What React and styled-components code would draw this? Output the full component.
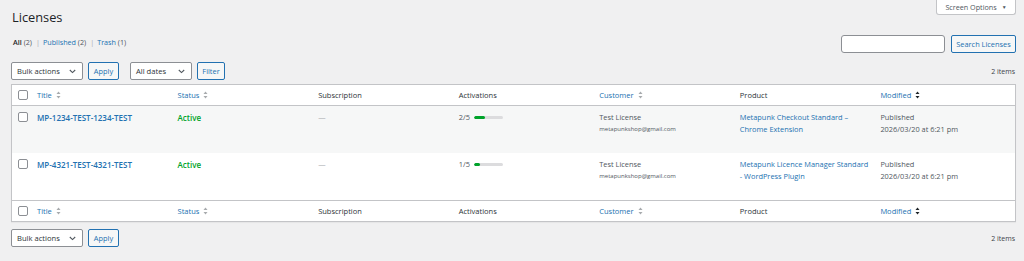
import React from "react";
import styled, { createGlobalStyle } from "styled-components";

const Global = createGlobalStyle`
  html, body { margin: 0; padding: 0; background: #f0f0f1; }
  body { font-family: "Open Sans", "Noto Sans", sans-serif; color: #3c434a; font-size: 7.3px; }
  * { box-sizing: border-box; }
`;

const Wrap = styled.div`
  padding: 0 8px 0 11px;
  width: 1024px;
`;

const TopRow = styled.div`
  display: flex;
  justify-content: space-between;
  align-items: flex-start;
  height: 35px;
`;

const Heading = styled.h1`
  margin: 0;
  padding: 8px 0 0 1px;
  font-size: 12.8px;
  line-height: 18px;
  font-weight: 400;
  color: #1d2327;
`;

const ScreenOptions = styled.button`
  height: 15px;
  width: 80px;
  border: 1px solid #c3c4c7;
  border-top: none;
  border-radius: 0 0 3px 3px;
  background: #fff;
  color: #50575e;
  font-family: inherit;
  font-size: 7.2px;
  display: flex;
  align-items: center;
  justify-content: center;
  gap: 5px;
  padding: 0 0 1px 0;
  cursor: pointer;
`;

const Caret = styled.span`
  font-size: 5px;
  color: #50575e;
`;

const SubRow = styled.div`
  display: flex;
  justify-content: space-between;
  align-items: flex-start;
  height: 27px;
`;

const SubSub = styled.ul`
  list-style: none;
  margin: 0;
  padding: 1px 0 0 2px;
  display: flex;
  font-size: 7.2px;
  line-height: 12px;
  color: #646970;
`;

const SubItem = styled.li`
  white-space: pre;
`;

const Sep = styled.span`
  color: #a7aaad;
  margin: 0 3px 0 4px;
`;

const SubLink = styled.a`
  color: ${(p) => (p.$current ? "#1d2327" : "#2271b1")};
  font-weight: ${(p) => (p.$current ? 600 : 400)};
  text-decoration: none;
`;

const Count = styled.span`
  color: #50575e;
`;

const SearchBox = styled.div`
  display: flex;
  gap: 6px;
`;

const SearchInput = styled.input`
  width: 104px;
  height: 18px;
  border: 1px solid #8c8f94;
  border-radius: 3px;
  background: #fff;
  padding: 0 4px;
`;

const Button = styled.button`
  height: 18px;
  width: ${(p) => p.$w}px;
  border: 1px solid #2271b1;
  border-radius: 2px;
  background: #f6f7f7;
  color: #2271b1;
  font-family: inherit;
  font-size: 7.4px;
  padding: 0;
  cursor: pointer;
`;

const TableNav = styled.div`
  display: flex;
  align-items: center;
  height: 18px;
  margin: ${(p) => (p.$bottom ? "7px 0 0" : "0")};
`;

const Actions = styled.div`
  display: flex;
  align-items: center;
  gap: 5px;
  margin-right: ${(p) => p.$mr || 0}px;
`;

const Select = styled.div`
  width: ${(p) => p.$w}px;
  height: 18px;
  border: 1px solid #8c8f94;
  border-radius: 2px;
  background: #fff;
  color: #2c3338;
  display: flex;
  align-items: center;
  justify-content: space-between;
  padding: 0 6px 0 5px;
  font-size: 7.6px;
`;

const Items = styled.div`
  margin-left: auto;
  font-size: 7px;
  color: #3c434a;
  padding-right: 1px;
`;

const Table = styled.table`
  width: 100%;
  margin-top: 4px;
  border: 1px solid #c3c4c7;
  border-collapse: separate;
  border-spacing: 0;
  background: #fff;
  table-layout: fixed;
  box-shadow: 0 1px 1px rgba(0, 0, 0, 0.04);
`;

const CbCol = styled.col`
  width: 19px;
`;

const Th = styled.th`
  text-align: left;
  font-weight: 400;
  font-size: 7.5px;
  height: 21px;
  padding: 0 6px;
  color: #2c3338;
  vertical-align: middle;
  border-bottom: ${(p) => (p.$foot ? "none" : "1px solid #c3c4c7")};
  border-top: ${(p) => (p.$foot ? "1px solid #c3c4c7" : "none")};
`;

const CbCell = styled.td`
  padding: ${(p) => (p.$head ? "0 0 0 6px" : "6px 0 0 6px")};
  vertical-align: ${(p) => (p.$head ? "middle" : "top")};
  border-bottom: ${(p) => (p.$headBorder ? "1px solid #c3c4c7" : "none")};
  border-top: ${(p) => (p.$footBorder ? "1px solid #c3c4c7" : "none")};
`;

const Check = styled.span`
  display: block;
  width: 10px;
  height: 10px;
  border: 1px solid #8c8f94;
  border-radius: 2px;
  background: #fff;
`;

const SortLink = styled.a`
  color: #2271b1;
  text-decoration: none;
  display: inline-flex;
  align-items: center;
  gap: 4px;
`;

const Row = styled.tr`
  background: ${(p) => (p.$alt ? "#f6f7f7" : "#fff")};
`;

const Td = styled.td`
  height: 47px;
  padding: 6px 6px 0;
  vertical-align: top;
  font-size: 7.4px;
  line-height: 11.5px;
  color: #50575e;
`;

const TitleLink = styled.a`
  color: #2271b1;
  font-weight: 600;
  font-size: 8px;
  text-decoration: none;
`;

const Active = styled.span`
  color: #00a32a;
  font-weight: 600;
  font-size: 8px;
`;

const Dash = styled.span`
  color: #a7aaad;
`;

const ActWrap = styled.div`
  display: flex;
  align-items: center;
  gap: 4px;
`;

const Bar = styled.div`
  width: 29px;
  height: 3px;
  border-radius: 2px;
  background: #dcdcde;
  overflow: hidden;
`;

const Fill = styled.div`
  height: 100%;
  background: #00a32a;
  border-radius: 2px;
`;

const Email = styled.div`
  font-size: 6px;
  line-height: 11px;
`;

const ProductLink = styled.a`
  color: #2271b1;
  text-decoration: none;
`;

const SortIcon = ({ dark }) => (
  <svg width="5" height="8" viewBox="0 0 5 8">
    <path d="M2.5 0.5 L4.5 3 L0.5 3 Z" fill={dark ? "#1d2327" : "#a7aaad"} />
    <path d="M2.5 7.5 L4.5 5 L0.5 5 Z" fill={dark ? "#1d2327" : "#a7aaad"} />
  </svg>
);

const Chevron = () => (
  <svg width="7" height="5" viewBox="0 0 7 5">
    <path d="M0.8 1 L3.5 3.6 L6.2 1" fill="none" stroke="#50575e" strokeWidth="1.1" />
  </svg>
);

const rows = [
  {
    title: "MP-1234-TEST-1234-TEST",
    act: 2,
    product: ["Metapunk Checkout Standard –", "Chrome Extension"],
  },
  {
    title: "MP-4321-TEST-4321-TEST",
    act: 1,
    product: ["Metapunk Licence Manager Standard", "- WordPress Plugin"],
  },
];

const HeadCells = ({ foot }) => (
  <tr>
    <CbCell $head $headBorder={!foot} $footBorder={foot}>
      <Check />
    </CbCell>
    <Th $foot={foot}>
      <SortLink>Title <SortIcon /></SortLink>
    </Th>
    <Th $foot={foot}>
      <SortLink>Status <SortIcon /></SortLink>
    </Th>
    <Th $foot={foot}>Subscription</Th>
    <Th $foot={foot}>Activations</Th>
    <Th $foot={foot}>
      <SortLink>Customer <SortIcon /></SortLink>
    </Th>
    <Th $foot={foot}>Product</Th>
    <Th $foot={foot}>
      <SortLink>Modified <SortIcon dark /></SortLink>
    </Th>
  </tr>
);

export default function App() {
  return (
    <>
      <Global />
      <Wrap>
        <TopRow>
          <Heading>Licenses</Heading>
          <ScreenOptions>
            Screen Options <Caret>▼</Caret>
          </ScreenOptions>
        </TopRow>
        <SubRow>
          <SubSub>
            <SubItem>
              <SubLink $current>All</SubLink> <Count>(2)</Count>
              <Sep>|</Sep>
            </SubItem>
            <SubItem>
              <SubLink>Published</SubLink> <Count>(2)</Count>
              <Sep>|</Sep>
            </SubItem>
            <SubItem>
              <SubLink>Trash</SubLink> <Count>(1)</Count>
            </SubItem>
          </SubSub>
          <SearchBox>
            <SearchInput />
            <Button $w={65}>Search Licenses</Button>
          </SearchBox>
        </SubRow>
        <TableNav>
          <Actions $mr={11}>
            <Select $w={72}>
              Bulk actions <Chevron />
            </Select>
            <Button $w={31}>Apply</Button>
          </Actions>
          <Actions>
            <Select $w={62}>
              All dates <Chevron />
            </Select>
            <Button $w={28}>Filter</Button>
          </Actions>
          <Items>2 items</Items>
        </TableNav>
        <Table>
          <colgroup>
            <CbCol />
            <col />
            <col />
            <col />
            <col />
            <col />
            <col />
            <col />
          </colgroup>
          <thead>
            <HeadCells />
          </thead>
          <tbody>
            {rows.map((r, i) => (
              <Row key={r.title} $alt={i === 0}>
                <CbCell>
                  <Check />
                </CbCell>
                <Td>
                  <TitleLink>{r.title}</TitleLink>
                </Td>
                <Td>
                  <Active>Active</Active>
                </Td>
                <Td>
                  <Dash>—</Dash>
                </Td>
                <Td>
                  <ActWrap>
                    {r.act}/5
                    <Bar>
                      <Fill style={{ width: `${(r.act / 5) * 100}%` }} />
                    </Bar>
                  </ActWrap>
                </Td>
                <Td>
                  Test License
                  <Email>metapunkshop@gmail.com</Email>
                </Td>
                <Td>
                  <ProductLink>
                    {r.product[0]}
                    <br />
                    {r.product[1]}
                  </ProductLink>
                </Td>
                <Td>
                  Published
                  <br />
                  2026/03/20 at 6:21 pm
                </Td>
              </Row>
            ))}
          </tbody>
          <tfoot>
            <HeadCells foot />
          </tfoot>
        </Table>
        <TableNav $bottom>
          <Actions>
            <Select $w={72}>
              Bulk actions <Chevron />
            </Select>
            <Button $w={31}>Apply</Button>
          </Actions>
          <Items>2 items</Items>
        </TableNav>
      </Wrap>
    </>
  );
}
